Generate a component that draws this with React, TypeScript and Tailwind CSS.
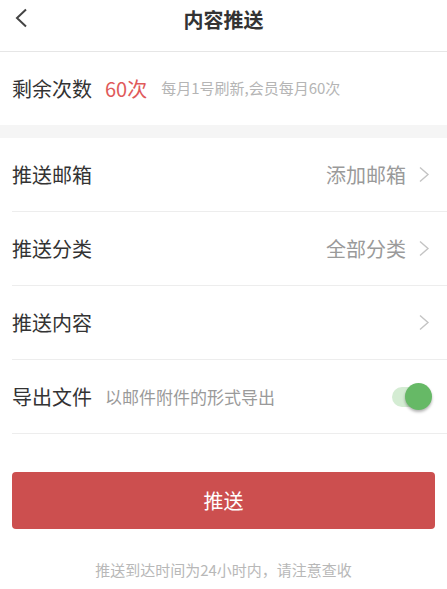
const font = 'font-["Noto_Sans_CJK_SC","Noto_Sans",sans-serif]';

function Chevron() {
  return (
    <svg width="12" height="17" viewBox="0 0 12 17" className="ml-3">
      <path d="M2 1.5 L10 8.5 L2 15.5" fill="none" stroke="#c4c4c4" strokeWidth="1.4" />
    </svg>
  );
}

function Row({ label, value, extra, toggle }: { label: string; value?: string; extra?: string; toggle?: boolean }) {
  return (
    <div className="flex h-[74px] items-center border-b border-[#ededed] pr-[17px]">
      <span className="text-[20px] text-[#333333]">{label}</span>
      {extra && <span className="ml-[13px] text-[17px] text-[#9a9a9a]">{extra}</span>}
      <div className="flex-1" />
      {value && <span className="text-[20px] text-[#9a9a9a]">{value}</span>}
      {toggle ? (
        <div className="relative mr-[-2px] h-[20px] w-[40px]">
          <div className="absolute left-0 top-0 h-[20px] w-[36px] rounded-full bg-[#d4ecd3]" />
          <div className="absolute right-0 top-[-4px] h-[27px] w-[27px] rounded-full bg-[#66b966] shadow-[0_2px_3px_rgba(0,0,0,0.3)]" />
        </div>
      ) : (
        <Chevron />
      )}
    </div>
  );
}

export default function App() {
  return (
    <div className={`${font} h-[589px] w-[447px] bg-white`}>
      {/* Header */}
      <div className="relative flex h-[52px] items-center justify-center border-b border-[#e6e6e6]">
        <svg width="14" height="20" viewBox="0 0 14 20" className="absolute left-[14px] top-[8px]">
          <path d="M12 1.5 L3 10 L12 18.5" fill="none" stroke="#444" strokeWidth="2" />
        </svg>
        <span className="mt-[-12px] text-[20px] font-bold text-[#333]">内容推送</span>
      </div>

      {/* Remaining count */}
      <div className="flex h-[73px] items-center px-[12px]">
        <span className="text-[20px] text-[#333]">剩余次数</span>
        <span className="ml-[13px] text-[20px] text-[#e05a5a]">60次</span>
        <span className="ml-[14px] text-[15px] text-[#b5b5b5]">每月1号刷新,会员每月60次</span>
      </div>

      <div className="h-[13px] bg-[#f5f5f5]" />

      {/* Settings */}
      <div className="pl-[12px]">
        <Row label="推送邮箱" value="添加邮箱" />
        <Row label="推送分类" value="全部分类" />
        <Row label="推送内容" />
        <Row label="导出文件" extra="以邮件附件的形式导出" toggle />
      </div>

      <div className="px-[12px] pt-[38px]">
        <button className="flex h-[57px] w-full items-center justify-center rounded-[4px] bg-[#cc4f4f] text-[20px] text-white">
          推送
        </button>
      </div>

      <p className="mt-[30px] text-center text-[15px] text-[#b8b8b8]">推送到达时间为24小时内，请注意查收</p>
    </div>
  );
}
